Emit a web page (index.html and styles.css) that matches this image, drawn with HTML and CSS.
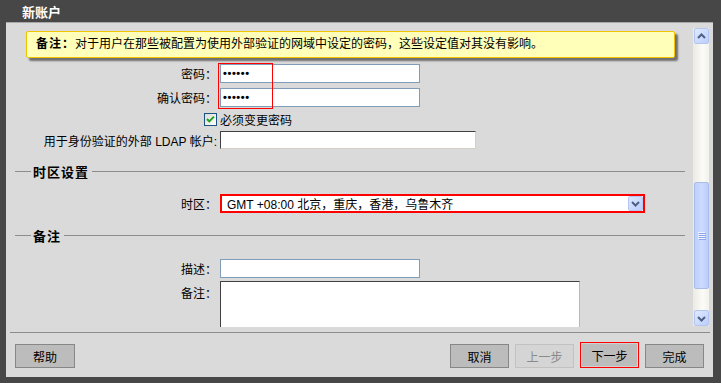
FILE: index.html
```html
<!DOCTYPE html>
<html lang="zh-CN">
<head>
<meta charset="utf-8">
<title>新账户</title>
<link rel="stylesheet" href="styles.css">
</head>
<body>
<div class="title">新账户</div>
<div class="panel">
  <div class="scroll">
    <div class="content">
      <div class="note"><b>备注：</b>对于用户在那些被配置为使用外部验证的网域中设定的密码，这些设定值对其没有影响。</div>

      <div class="row r-pw1">
        <span class="label">密码：</span>
        <span class="input short pw">••••••</span>
      </div>
      <div class="row r-pw2">
        <span class="label">确认密码：</span>
        <span class="input short pw">••••••</span>
      </div>
      <div class="row r-check">
        <span class="label"><span class="checkbox"><svg width="11" height="11" viewBox="0 0 11 11"><path d="M2 5 L4.3 7.4 L9 2.6" fill="none" stroke="#21a121" stroke-width="2"/></svg></span></span>
        <span class="check-text">必须变更密码</span>
      </div>
      <div class="row r-ldap">
        <span class="label">用于身份验证的外部 LDAP 帐户:</span>
        <span class="input inset ldap"></span>
      </div>

      <div class="section s-tz"><span class="legend">时区设置</span></div>

      <div class="row r-tz">
        <span class="label">时区：</span>
        <span class="select">
          <span class="select-text">GMT +08:00 北京，重庆，香港，乌鲁木齐</span>
          <span class="select-btn"><svg width="13" height="13" viewBox="0 0 13 13"><path d="M3 5 L6.5 8.5 L10 5" fill="none" stroke="#4d6185" stroke-width="2"/></svg></span>
        </span>
      </div>

      <div class="section s-note"><span class="legend">备注</span></div>

      <div class="row r-desc">
        <span class="label">描述：</span>
        <span class="input short"></span>
      </div>
      <div class="row r-remark">
        <span class="label">备注：</span>
        <span class="textarea"></span>
      </div>
    </div>
    <div class="scrollbar">
      <div class="sb-btn"><svg width="13" height="13" viewBox="0 0 13 13"><path d="M3 8 L6.5 4.5 L10 8" fill="none" stroke="#4d6185" stroke-width="2"/></svg></div>
      <div class="sb-track">
        <div class="thumb"><svg width="8" height="8" viewBox="0 0 8 8"><path d="M0 0.5H7M0 2.5H7M0 4.5H7M0 6.5H7" stroke="#eef3ff" stroke-width="1"/><path d="M1 1.5H8M1 3.5H8M1 5.5H8M1 7.5H8" stroke="#8ca6ee" stroke-width="1"/></svg></div>
      </div>
      <div class="sb-btn"><svg width="13" height="13" viewBox="0 0 13 13"><path d="M3 5 L6.5 8.5 L10 5" fill="none" stroke="#4d6185" stroke-width="2"/></svg></div>
    </div>
  </div>
  <div class="footer">
    <button class="btn">帮助</button>
    <span class="spacer"></span>
    <button class="btn">取消</button>
    <button class="btn disabled">上一步</button>
    <button class="btn next">下一步</button>
    <button class="btn">完成</button>
  </div>
</div>
<div class="highlight"></div>
</body>
</html>
```

FILE: styles.css
```css
* { box-sizing: border-box; }
html, body { margin: 0; padding: 0; }
body {
  width: 721px;
  height: 383px;
  overflow: hidden;
  position: relative;
  background: #474747;
  font-family: "Liberation Sans", "Noto Sans CJK SC", sans-serif;
  font-size: 12px;
  color: #000;
}
.title {
  height: 22px;
  padding: 5px 0 0 22px;
  color: #fff;
  font-weight: bold;
  font-size: 13px;
  line-height: 15px;
}
.panel {
  margin-left: 6px;
  width: 707px;
  height: 355px;
  background: #dadada;
  border-top: 1px solid #a8a8a8;
  padding: 4px 3px 0 4px;
}
.scroll { height: 300px; display: flex; }
.content {
  flex: 1;
  overflow: hidden;
  display: flex;
  flex-direction: column;
}
.note {
  flex: none;
  margin: 4px 18px 0 16px;
  height: 27px;
  border: 1px solid #efc300;
  border-radius: 2px;
  background: #ffffb9;
  box-shadow: 3px 3px 2px #6f6f6f;
  padding-left: 9px;
  line-height: 25px;
  white-space: nowrap;
}
.note b { letter-spacing: 1px; }
.row { flex: none; display: flex; align-items: center; }
.label {
  width: 207px;
  flex: none;
  text-align: right;
  white-space: nowrap;
  display: flex;
  justify-content: flex-end;
  align-items: center;
}
.input {
  display: block;
  height: 19px;
  margin-left: 3px;
  background: #fff;
  border: 1px solid #7f9db9;
}
.short { width: 200px; }
.pw {
  padding-left: 2px;
  font-weight: bold;
  font-size: 11px;
  line-height: 17px;
  letter-spacing: 0.6px;
}
.inset {
  border-color: #404040 #d4d0c8 #d4d0c8 #404040;
}
.ldap { width: 256px; height: 18px; }
.r-pw1 { margin-top: 6px; }
.r-pw2 { margin-top: 5px; }
.r-check { margin-top: 5px; height: 14px; }
.r-ldap { margin-top: 5px; }
.checkbox {
  width: 13px;
  height: 13px;
  border: 1px solid #1c5180;
  background: linear-gradient(135deg, #dcdcd7, #fff);
  display: flex;
  align-items: center;
  justify-content: center;
}
.check-text { margin-left: 3px; }
.section {
  flex: none;
  height: 17px;
  margin: 0 8px 0 5px;
  display: flex;
  align-items: center;
  font-weight: bold;
  font-size: 13px;
  letter-spacing: 1px;
}
.section::before, .section::after {
  content: "";
  height: 1px;
  background: #8c8c8c;
}
.section::before { width: 16px; }
.section::after { flex: 1; }
.legend { margin: 0 3px 0 2px; }
.s-tz { margin-top: 14px; }
.s-note { margin-top: 14px; }
.r-tz { margin-top: 14px; }
.select {
  margin-left: 3px;
  width: 425px;
  height: 19px;
  border: 2px solid #f00;
  background: #fff;
  display: flex;
  align-items: center;
  justify-content: space-between;
}
.select-text { padding-left: 5px; white-space: nowrap; }
.select-btn {
  width: 15px;
  height: 15px;
  background: linear-gradient(135deg, #dfe8ff, #b9ccfb);
  border: 1px solid #b4c6f2;
  border-radius: 2px;
  display: flex;
  align-items: center;
  justify-content: center;
}
.r-desc { margin-top: 15px; }
.r-remark { margin-top: 3px; align-items: flex-start; }
.r-remark .label { padding-top: 3px; }
.textarea {
  display: block;
  margin-left: 3px;
  width: 360px;
  height: 60px;
  background: #fff;
  border: 1px solid;
  border-color: #404040 #b8b8b8 #b8b8b8 #404040;
}
.scrollbar {
  width: 16px;
  margin: 1px 1px 1px 0;
  background: linear-gradient(90deg, #ebeae2, #fbfbf8 60%, #f3f2ec);
  display: flex;
  flex-direction: column;
}
.sb-btn {
  flex: none;
  width: 15px;
  height: 16px;
  margin-left: 1px;
  background: linear-gradient(135deg, #e0e9ff, #bccefb);
  border: 1px solid #b3c5f1;
  border-radius: 2px;
  display: flex;
  align-items: center;
  justify-content: center;
}
.sb-track { flex: 1; }
.thumb {
  margin: 138px 0 0 1px;
  width: 15px;
  height: 107px;
  background: linear-gradient(90deg, #bcd0fb, #cbdaff 50%, #bccefa);
  border: 1px solid #a9bdeb;
  border-radius: 2px;
  display: flex;
  align-items: center;
  justify-content: center;
}
.footer {
  margin-top: 5px;
  border-top: 1px solid #8c8c8c;
  height: 45px;
  padding: 0 6px 9px 5px;
  display: flex;
  align-items: flex-end;
  gap: 6px;
}
.spacer { flex: 1; }
.btn {
  width: 59px;
  height: 24px;
  padding: 0;
  margin: 0;
  background: #bcbcbc;
  border: 1px solid #878787;
  font-family: "Liberation Sans", "Noto Sans CJK SC", sans-serif;
  font-size: 12px;
  color: #000;
}
.footer .btn:first-child { width: 60px; }
.btn.disabled {
  background: #d5d5d5;
  border-color: #c2c2c2;
  color: #8a8a8a;
}
.btn.next {
  height: 26px;
  border-color: #f00;
  box-shadow: inset 0 0 0 1px #d0d0d0;
}
.highlight {
  position: absolute;
  left: 218px;
  top: 63px;
  width: 55px;
  height: 46px;
  border: 1px solid #f00;
}
```
